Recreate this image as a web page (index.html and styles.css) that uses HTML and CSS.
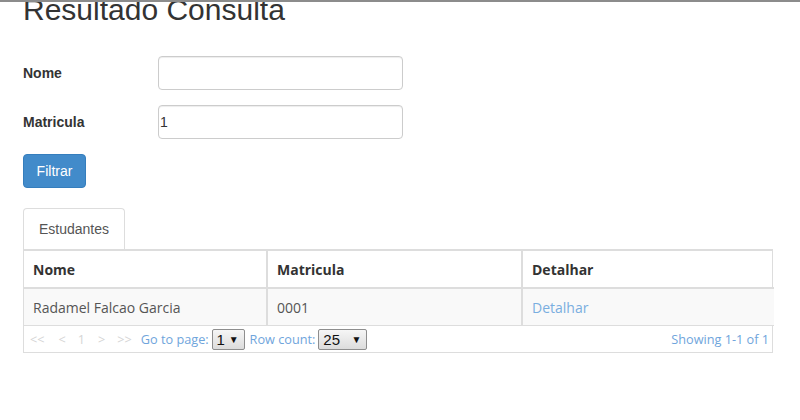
FILE: index.html
```html
<!DOCTYPE html>
<html lang="pt">
<head>
<meta charset="utf-8">
<title>Resultado Consulta</title>
<link rel="stylesheet" href="styles.css">
</head>
<body>
<div class="page">
  <h1 class="title">Resultado Consulta</h1>
  <form class="filter">
    <div class="row">
      <label class="label">Nome</label>
      <input class="field" type="text" value="">
    </div>
    <div class="row">
      <label class="label">Matricula</label>
      <input class="field" type="text" value="1">
    </div>
    <button type="button" class="btn">Filtrar</button>
  </form>
  <div class="tabs">
    <div class="tab">Estudantes</div>
  </div>
  <div class="grid">
    <div class="cell head">Nome</div>
    <div class="cell head">Matricula</div>
    <div class="cell head last">Detalhar</div>
    <div class="cell body">Radamel Falcao Garcia</div>
    <div class="cell body">0001</div>
    <div class="cell body last"><a class="link" href="#">Detalhar</a></div>
    <div class="footer">
      <div class="pager">
        <span class="nav n1">&lt;&lt;</span>
        <span class="nav n2">&lt;</span>
        <span class="nav n3">1</span>
        <span class="nav n4">&gt;</span>
        <span class="nav n5">&gt;&gt;</span>
        <span class="info">Go to page:</span>
        <span class="sel sel-page"><span class="sel-val">1</span><span class="arrow">&#9660;</span></span>
        <span class="info">Row count:</span>
        <span class="sel sel-rows"><span class="sel-val">25</span><span class="arrow">&#9660;</span></span>
      </div>
      <div class="info showing">Showing 1-1 of 1</div>
    </div>
  </div>
</div>
</body>
</html>
```
FILE: styles.css
```css
html, body {
  margin: 0;
  padding: 0;
  background: #fff;
}
body {
  border-top: 2px solid #8c8c8c;
  font-family: "Liberation Sans", Arial, sans-serif;
  font-size: 14px;
  color: #333;
  overflow: hidden;
}
.page {
  padding-left: 23px;
  width: 750px;
}
.title {
  margin: -9px 0 0 0;
  font-size: 30px;
  font-weight: 500;
  line-height: 33px;
  color: #333;
}
.filter {
  margin-top: 30px;
  display: flex;
  flex-direction: column;
  gap: 15px;
  align-items: flex-start;
}
.row {
  display: flex;
  align-items: center;
  height: 34px;
}
.label {
  width: 135px;
  font-weight: bold;
  font-size: 14px;
  color: #333;
}
.field {
  box-sizing: border-box;
  width: 245px;
  height: 34px;
  border: 1px solid #ccc;
  border-radius: 4px;
  padding: 0 1px;
  margin: 0;
  font-family: "Liberation Sans", Arial, sans-serif;
  font-size: 14px;
  color: #333;
  background: #fff;
  box-shadow: inset 0 1px 1px rgba(0,0,0,0.075);
}
.btn {
  box-sizing: border-box;
  height: 34px;
  width: 63px;
  border: 1px solid #357ebd;
  border-radius: 4px;
  background: #428bca;
  color: #fff;
  font-family: "Liberation Sans", Arial, sans-serif;
  font-size: 14px;
  padding: 0;
}
.tabs {
  margin-top: 20px;
  display: flex;
}
.tab {
  box-sizing: border-box;
  width: 102px;
  height: 41px;
  border: 1px solid #ddd;
  border-bottom: none;
  border-radius: 4px 4px 0 0;
  color: #555;
  font-size: 14px;
  line-height: 40px;
  text-align: center;
  background: #fff;
}
.grid {
  display: grid;
  grid-template-columns: 244px 255px 251px;
  border: 1px solid #ddd;
  border-top: 2px solid #ddd;
  font-family: "Open Sans", sans-serif;
  font-size: 14px;
  color: #333;
}
.cell {
  padding: 0 9px;
  border-right: 2px solid #ddd;
  display: flex;
  align-items: center;
}
.cell.last {
  border-right: none;
}
.head {
  height: 36px;
  font-weight: bold;
  border-bottom: 2px solid #ddd;
}
.body {
  height: 36px;
  background: #f9f9f9;
  color: #555;
  border-bottom: 1px solid #ddd;
}
.link {
  color: #7aaee0;
  text-decoration: none;
}
.footer {
  grid-column: 1 / 4;
  height: 26px;
  display: flex;
  align-items: center;
  justify-content: space-between;
  padding: 0 5px 0 6px;
  font-size: 12.7px;
}
.pager {
  display: flex;
  align-items: center;
}
.nav {
  color: #d5d5d5;
}
.n1 { margin-right: 14px; }
.n2 { margin-right: 12px; }
.n3 { margin-right: 13px; }
.n4 { margin-right: 12px; }
.n5 { margin-right: 9px; }
.info {
  color: #6fa5dc;
}
.sel {
  box-sizing: border-box;
  height: 21px;
  margin: 0 5px 0 3px;
  border: 1px solid #8e8e8e;
  border-radius: 2px;
  background: linear-gradient(#f6f6f6, #dcdcdc);
  display: flex;
  align-items: center;
  justify-content: space-between;
  padding: 0 5px 0 4px;
  font-family: "Liberation Sans", Arial, sans-serif;
  font-size: 15px;
  color: #111;
}
.sel-page { width: 33px; }
.sel-rows { width: 49px; }
.arrow {
  font-size: 10px;
  color: #111;
}
```
